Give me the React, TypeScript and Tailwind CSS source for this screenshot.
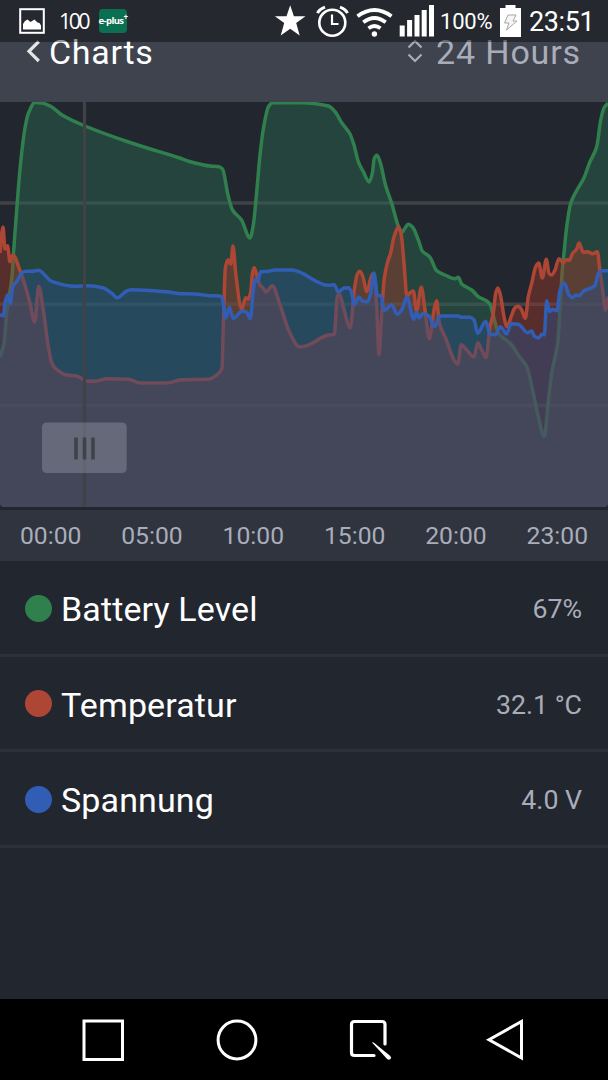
import clsx from "clsx";

type Point = [number, number];

const CHART_TOP = 102;
const CHART_BOTTOM = 507;

const LEVEL: Point[] = [
  [0, 357], [4, 343], [7, 310], [12, 277], [13.5, 253], [17.3, 202], [20.7, 162], [25, 128], [28.5, 113], [35, 102.5],
  [42, 103], [51, 106.5], [62, 115], [85, 126], [130, 142.5], [178, 157.5], [195, 163], [210, 166], [218, 166.6],
  [222.5, 169], [228, 195], [232.5, 210], [241.5, 220], [250, 238], [253.3, 225], [256.7, 192], [260, 155],
  [263.5, 128], [268.5, 106.5], [272.7, 102.7], [301.7, 102.7], [328.5, 106], [335, 111.7], [341.7, 122.7], [350, 134],
  [354, 145], [358.3, 161.7], [363.3, 171.7], [369.3, 182], [372.3, 173.3], [374.3, 158.3], [377, 155.3], [380, 161.7],
  [385.7, 185.7], [391.7, 203.3], [398.5, 226.7], [402, 232.5], [405, 228], [408.3, 224.3], [412.7, 227.3], [418.3, 240],
  [422.3, 251], [430, 257.3], [436.7, 270.7], [445, 275], [455, 278.7], [458.3, 277.3], [461.7, 284], [471.7, 290],
  [478.3, 296.7], [486.7, 301], [490, 304.3], [492.7, 313.3], [496.7, 328.3], [498.5, 333], [511.7, 345], [518.3, 355],
  [526.7, 366.7], [533.3, 393.3], [538.3, 416.7], [544.3, 436.5], [548.3, 401.7], [551.7, 373.3], [557.7, 343.3],
  [560, 310], [562.3, 270], [564, 253], [566.7, 226.7], [570.7, 203.3], [576, 191.7], [584, 177.7], [589.3, 163.3],
  [596.7, 146.7], [600.7, 120], [604, 108], [608, 103],
];

const TEMPERATURE: Point[] = [
  [0, 253], [3, 227], [5, 249], [7.5, 245.7], [10, 261.7], [12.8, 255], [20.7, 272.7], [25, 285], [30, 303.3],
  [34.7, 322], [38.7, 286.3], [43.3, 310], [48.3, 346.7], [51.7, 362.7], [56, 369], [66.7, 375], [76.7, 376],
  [87.3, 381.3], [96.7, 381], [106.7, 378.7], [128.3, 379.3], [140, 383], [166.7, 383], [181.7, 379.7], [208.3, 379.3],
  [216.7, 375], [222, 368.3], [223.3, 326.7], [224.3, 293], [225.3, 268.3], [228, 259.7], [230.7, 264.3], [233, 246],
  [235.7, 273.3], [241.7, 309.3], [245.7, 297.7], [248.3, 299.3], [250.7, 291.7], [252.7, 271.7], [254.3, 267.7],
  [256.7, 275], [260, 285], [263.3, 288.3], [266, 292], [272.3, 285.7], [280, 305], [290, 333.3], [299.3, 346.7],
  [303.3, 346.5], [328.3, 335], [334.3, 334.3], [337.3, 296.7], [339.3, 294], [343.3, 306.7], [350.3, 328],
  [354.3, 290], [357.3, 274.3], [359.7, 271.3], [362.3, 275], [367, 291.7], [370.7, 278.3], [372.7, 274], [375, 280],
  [376.7, 306.7], [379, 354.7], [381.7, 313.3], [384.3, 278.3], [387.7, 261.7], [390.7, 252.7], [394, 236.7],
  [398.7, 226.7], [401.3, 235], [404, 263.3], [407, 296.7], [410, 292.7], [413.3, 291], [416.5, 311], [421.3, 287.3],
  [425, 310], [429.3, 338.7], [434, 310], [436.7, 300.7], [439.3, 323.3], [445, 336.7], [457.7, 364], [461.3, 344.7],
  [466.7, 350], [474, 357], [477.7, 342.7], [481.7, 350], [486, 357.7], [490, 326.7], [493.3, 313.3], [495.7, 293.3],
  [497.7, 288], [500, 293.3], [504, 316.7], [506.7, 326.7], [511.7, 315], [515, 307.7], [518.3, 306.3], [521.7, 310],
  [525.3, 318.3], [528.3, 296.7], [531.7, 283.3], [535.7, 266.7], [538.7, 263], [542.3, 278], [546.3, 259.3],
  [549, 273.3], [551.7, 275], [555, 270], [559, 258.7], [563.3, 262.7], [566.7, 259.7], [569.3, 260.3], [572.7, 253.3],
  [576.7, 249], [579, 243], [583.3, 252.3], [587.3, 251.7], [592.7, 253.7], [597.3, 251.7], [600, 271.7], [602.7, 290],
  [605.3, 310], [608, 296.7],
];

const VOLTAGE: Point[] = [
  [0, 314.7], [3.3, 315.7], [5.3, 301.7], [7.7, 294.7], [10.3, 303.7], [12.7, 286.7], [17.3, 280.7], [21.7, 273],
  [26, 271.3], [32.3, 271.3], [38.3, 270.3], [51.7, 281.3], [75, 286.3], [88.3, 285.7], [103.3, 288], [111.7, 293.3],
  [117.3, 297.7], [126.7, 291], [131.7, 289.7], [166.7, 291.7], [181.7, 293.7], [195, 294], [210, 295.7], [220, 296],
  [222.3, 298.3], [225.7, 318], [229.3, 307.3], [233.3, 318.3], [242.3, 311], [246.7, 312.3], [250.3, 318.7],
  [253.3, 290], [255.3, 279.7], [257.7, 281], [260.7, 271.7], [268.3, 271.3], [275, 270], [291.7, 270], [328.3, 285.3],
  [334.3, 284.7], [338.3, 292], [344, 288], [348.3, 287.7], [351, 291], [354.3, 304.7], [358.7, 297], [362.3, 301],
  [367.7, 301.7], [370.7, 293.3], [374, 273], [377.3, 295], [381, 296], [384.3, 310.3], [391.7, 304.7], [397.3, 314.3],
  [402, 309.3], [406.9, 297], [413.7, 319.3], [416.3, 312.3], [419, 318], [422.3, 313.7], [428.3, 315.3],
  [434.7, 326.3], [440, 316], [458.3, 316], [461.7, 317.3], [470, 317.3], [474, 320], [477.7, 333.3], [485.7, 321.3],
  [490.3, 334.3], [495.7, 334.7], [500.3, 326.7], [506.7, 334], [511, 323.7], [518.3, 324.3], [527.7, 332.7],
  [531.7, 331], [534.3, 336.3], [538.7, 338], [541.7, 334.3], [544.3, 335], [546.7, 300.7], [549.7, 311.7],
  [552.7, 309.3], [557, 310.7], [560, 290], [564.3, 283], [569, 295], [572.3, 297.7], [576, 295], [579.3, 295.7],
  [583.3, 291.3], [595, 285.7], [598.3, 273.3], [601.7, 270.7], [608, 270.7],
];

// back to front, every area is translucent over the previous one
const SERIES = [
  { name: "level", points: LEVEL, stroke: "#30804d", fill: "rgb(43 107 82)", opacity: 0.45 },
  { name: "temperature", points: TEMPERATURE, stroke: "#ae4636", fill: "rgb(162 57 37)", opacity: 0.42 },
  { name: "voltage", points: VOLTAGE, stroke: "#325db5", fill: "rgb(42 80 132)", opacity: 0.46 },
];

const HOURS = ["00:00", "05:00", "10:00", "15:00", "20:00", "23:00"];

const READINGS = [
  { name: "Battery Level", value: "67%", dot: "bg-[#30804d]" },
  { name: "Temperatur", value: "32.1 °C", dot: "bg-[#ae4636]" },
  { name: "Spannung", value: "4.0 V", dot: "bg-[#325db5]" },
];

// monotone cubic through the points, so peaks never overshoot
const smoothPath = (pts: Point[]) => {
  const slopes = pts.slice(1).map((p, i) => (p[1] - pts[i][1]) / (p[0] - pts[i][0]));
  const tangents = pts.map((_, i) => {
    if (i === 0) return slopes[0];
    if (i === pts.length - 1) return slopes[i - 1];
    const a = slopes[i - 1];
    const b = slopes[i];
    return a * b <= 0 ? 0 : (2 * a * b) / (a + b);
  });
  let d = `M${pts[0][0]} ${pts[0][1]}`;
  for (let i = 1; i < pts.length; i++) {
    const [x0, y0] = pts[i - 1];
    const [x1, y1] = pts[i];
    const h = (x1 - x0) / 3;
    d += `C${x0 + h} ${y0 + tangents[i - 1] * h} ${x1 - h} ${y1 - tangents[i] * h} ${x1} ${y1}`;
  }
  return d;
};

const StatusBar = () => (
  <div className="absolute inset-x-0 top-0 z-10 flex h-[42px] items-center bg-black/40 text-white">
    <svg className="ml-[19px] h-[26px] w-[26px]" viewBox="0 0 26 26">
      <rect x="1.2" y="1.2" width="23.6" height="23.6" fill="none" stroke="#fff" strokeWidth="2" />
      <path d="M4 21.500v-5.500l2-3 2.500-1.500 3 2.500 4-2.500 3 3 2 .5 1.500 2.500v4z" fill="#fff" />
    </svg>
    <span className="ml-[14px] w-[29px] text-center font-['Open_Sans'] text-[21.500px] leading-none tracking-[-2.700px]">100</span>
    <div className="ml-[11px] flex h-6 w-7 items-center justify-center whitespace-nowrap rounded bg-[#0b7051] font-['Open_Sans'] text-[9.500px] font-bold leading-none tracking-[-0.600px]">
      e-plus<sup className="-top-1 text-[8px]">+</sup>
    </div>
    <svg className="ml-[147px] h-8 w-[164px]" viewBox="274 5 164 32" fill="none" stroke="#fff">
      <path d="M290.200 5.300l3.700 10.900h11.600l-9.300 6.900 3.500 12.400-9.500-6.700-9.500 6.700 3.500-12.400-9.300-6.900h11.600z" fill="#fff" stroke="none" />
      <circle cx="332.300" cy="22.700" r="13" strokeWidth="2.600" />
      <path d="M332 14.500v9.500h6.500" strokeWidth="2.200" />
      <path d="M317.500 13.200q2-4 7.500-6M347.500 13.200q-2-4-7.500-6" strokeWidth="3" />
      <path d="M357.500 16.200q17-12.500 34 0M363.300 22.300q11.200-8.500 22.400 0M368.500 28.200q6-4.500 12 0" strokeWidth="3.800" />
      <circle cx="374.400" cy="34" r="2.700" fill="#fff" stroke="none" />
      <path d="M402.200 36.500v-11M409.600 36.500v-16.500M417 36.500v-21.500M424.200 36.500v-26.500M431.500 36.500v-31.500" strokeWidth="5" />
    </svg>
    <span className="ml-[2px] w-[55px] pt-[2px] text-[22px] leading-none tracking-[-0.200px]">100%</span>
    <svg className="ml-[5px] h-8 w-[21px]" viewBox="0 0 21 32">
      <path d="M5.500 0h10v3H21v29H0V3h5.500z" fill="#fff" />
      <path d="M8 10h8l-3 6h4L6.500 25l2.500-7H4.500z" fill="#f6f6f6" stroke="#a5a7ab" strokeWidth="1" />
    </svg>
    <span className="ml-[8px] pt-[3px] text-[27px] leading-none tracking-[-0.400px]">23:51</span>
  </div>
);

const Header = () => (
  <header className="relative h-[102px] bg-[#3e434e]">
    <StatusBar />
    <div className="flex items-center justify-between pl-[26px] pr-[27px] pt-[38px] text-[34px] leading-[28px]">
      <div className="flex items-center text-white">
        <svg className="-mt-[2px] mr-[9px] h-6 w-[14px]" viewBox="0 0 14 24" fill="none" stroke="#e4e5e7" strokeWidth="3.200">
          <path d="M12.800 2.500L3 12.300l9.800 9.700" />
        </svg>
        <span className="tracking-[0.700px]">Charts</span>
      </div>
      <div className="flex items-center text-[#a9adba]">
        <svg className="-mt-[2px] mr-[13px] h-6 w-4" viewBox="0 0 16 24" fill="none" stroke="#a9adba" strokeWidth="2.200">
          <path d="M1.500 8.500L8 2l6.500 6.500M1.500 15.500L8 22l6.500-6.500" />
        </svg>
        <span className="tracking-[0.850px]">24 Hours</span>
      </div>
    </div>
  </header>
);

const Chart = () => (
  <svg className="block h-[405px] w-[608px] rounded-b" viewBox="0 102 608 405">
    {[203, 304.3, 405.5].map((y) => (
      <path key={y} d={`M0 ${y}h608`} stroke="#404249" strokeWidth="3.400" />
    ))}
    {SERIES.map((s) => {
      const line = smoothPath(s.points);
      return (
        <g key={s.name}>
          <path d={`${line}V${CHART_BOTTOM}H0z`} fill={s.fill} fillOpacity={s.opacity} />
          <path d={line} fill="none" stroke={s.stroke} strokeWidth="3.500" strokeLinejoin="round" />
        </g>
      );
    })}
    {/* scrubber */}
    <path d={`M84.500 ${CHART_TOP}V${CHART_BOTTOM}`} stroke="#404248" strokeWidth="3.200" />
    <rect x="42" y="422.500" width="84.700" height="50.500" rx="4.500" fill="#666979" />
    <path d="M84.500 423v50" stroke="#5e616f" strokeWidth="3" opacity="0.5" />
    <path d="M76 437.500v22M84.500 437.500v22M93 437.500v22" stroke="#404248" strokeWidth="3.600" />
  </svg>
);

const NavBar = () => (
  <nav className="flex h-[81px] items-center bg-black pl-[82px]">
    <svg className="h-[42px] w-[42px]" viewBox="0 0 42 42" fill="none" stroke="#fff" strokeWidth="3">
      <rect x="2" y="2" width="38.500" height="38.500" />
    </svg>
    <svg className="ml-[92px] h-[42px] w-[42px]" viewBox="0 0 42 42" fill="none" stroke="#fff" strokeWidth="3">
      <circle cx="21" cy="21" r="18.900" />
    </svg>
    <svg className="ml-[90px] h-[42px] w-[44px]" viewBox="0 0 44 42" fill="none" stroke="#fff" strokeWidth="3.200" strokeLinecap="round">
      <path d="M26 36.500H6.500q-3 0-3-3V5.500q0-3 3-3h27.500q3 0 3 3V25" />
      <path d="M24 23.500q1-.5 2 .2l16 13q2 1.800.5 3.300t-3.600-.2z" fill="#fff" stroke="none" />
    </svg>
    <svg className="ml-[92px] h-[42px] w-[40px]" viewBox="0 0 40 42" fill="none" stroke="#fff" strokeWidth="3">
      <path d="M37.500 2.500v36.500L5 20.700z" />
    </svg>
  </nav>
);

const App = () => {
  return (
    <main className="flex h-[1080px] w-[608px] flex-col overflow-hidden bg-[#22262f] font-[Roboto,sans-serif]">
      <Header />
      <Chart />

      <div className="mt-[3px] grid h-[51px] grid-cols-6 items-center bg-[#30343f] pt-px text-center text-[24.700px] text-[#a9adba]">
        {HOURS.map((hour) => (
          <span key={hour}>{hour}</span>
        ))}
      </div>

      <ul className="flex-1">
        {READINGS.map((reading) => (
          <li
            key={reading.name}
            className="flex h-[95.600px] items-center border-b-[3px] border-[#2d313b] pl-[25px] pr-[26px] pt-[2px]"
          >
            <span className={clsx("h-[27px] w-[27px] rounded-full", reading.dot)} />
            <span className="ml-[9px] pt-[2px] text-[34px] leading-10 tracking-[0.130px] text-white">{reading.name}</span>
            <span className="ml-auto pt-[2px] text-[26.700px] leading-8 text-[#a9adba]">{reading.value}</span>
          </li>
        ))}
      </ul>

      <NavBar />
    </main>
  );
};

export default App;
